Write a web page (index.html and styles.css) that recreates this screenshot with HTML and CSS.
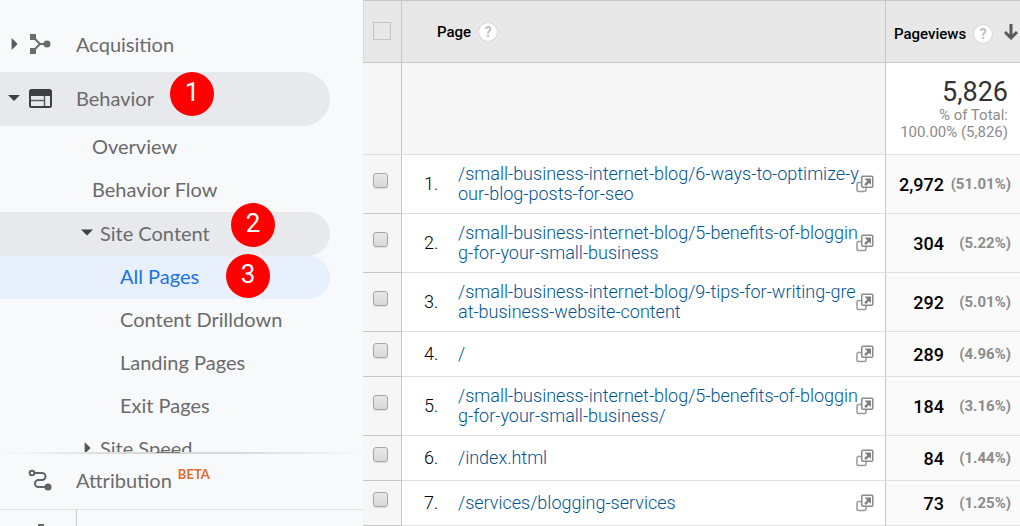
FILE: index.html
```
<!DOCTYPE html>
<html lang="en">
<head>
	<meta charset="utf-8">
	<meta name="viewport" content="width=device-width, initial-scale=1">
	<title>All Pages</title>
	<link rel="stylesheet" href="styles.css">
</head>
<body>
	<svg class="sprite" aria-hidden="true">
		<symbol id="open" viewBox="0 0 18 18">
			<rect x="1" y="7.500" width="9" height="9" rx="1.500" fill="#fff" stroke="#999" stroke-width="1.500"/>
			<rect x="5.750" y="1.250" width="11" height="11" rx="1" fill="#fff" stroke="#8a8a8a" stroke-width="1.500"/>
			<path d="M8.500 3.500H15V10l-2-2-3 3-1.800-1.800 3-3z" fill="#808080"/>
		</symbol>
	</svg>

	<nav class="sidebar">
		<div class="menu">
			<a href="#" class="item top">
				<span class="arrow right"></span>
				<svg class="icon" viewBox="0 0 24 24">
					<path d="M5 5l7 7-7 7M12 12h7" fill="none" stroke="#6b6b6b" stroke-width="2"/>
					<path d="M2 2h6v6H2zM2 16h6v6H2z" fill="#6b6b6b"/>
					<circle cx="19" cy="12" r="3.500" fill="#6b6b6b"/>
				</svg>
				Acquisition
			</a>
			<a href="#" class="item top open">
				<span class="arrow down"></span>
				<svg class="icon" viewBox="0 0 24 24">
					<rect x="2" y="4" width="21" height="17" rx="1.500" fill="none" stroke="#3c4043" stroke-width="2"/>
					<path d="M2 4h21v6H2z" fill="#3c4043"/>
					<path d="M3 14.500h13M16.500 10v10" fill="none" stroke="#5c6063" stroke-width="1.500"/>
				</svg>
				Behavior
				<span class="badge one">1</span>
			</a>
			<a href="#" class="item sub">Overview</a>
			<a href="#" class="item sub">Behavior Flow</a>
			<a href="#" class="item group open">
				<span class="arrow down"></span>
				Site Content
				<span class="badge two">2</span>
			</a>
			<a href="#" class="item leaf active">
				All Pages
				<span class="badge three">3</span>
			</a>
			<a href="#" class="item leaf">Content Drilldown</a>
			<a href="#" class="item leaf">Landing Pages</a>
			<a href="#" class="item leaf">Exit Pages</a>
			<a href="#" class="item group">
				<span class="arrow right"></span>
				Site Speed
			</a>
		</div>
		<div class="handle"></div>
		<a href="#" class="item top attribution">
			<svg class="icon" viewBox="0 0 24 24">
				<circle cx="4" cy="5" r="2.300" fill="none" stroke="#5f6368" stroke-width="2"/>
				<path d="M6.500 5H14a3.500 3.500 0 0 1 0 7h-3.500a3.500 3.500 0 0 0 0 7H20" fill="none" stroke="#5f6368" stroke-width="2"/>
				<circle cx="20" cy="19" r="3.500" fill="#5f6368"/>
			</svg>
			Attribution
			<span class="beta">BETA</span>
		</a>
		<div class="bottom">
			<div class="bottom_left"><span class="dot"></span></div>
		</div>
	</nav>

	<main>
		<table>
			<colgroup>
				<col class="col_check">
				<col>
				<col class="col_views">
			</colgroup>
			<thead>
				<tr>
					<th class="check"><input type="checkbox" class="all" aria-label="Select all"></th>
					<th class="page"><div class="head">Page <button type="button" class="help">?</button></div></th>
					<th class="views">
						<div class="head">
							Pageviews
							<button type="button" class="help">?</button>
							<svg class="sort" viewBox="0 0 16 16"><path d="M8 0v14M2 8l6 6 6-6" fill="none" stroke="#5a5a5a" stroke-width="3"/></svg>
						</div>
					</th>
				</tr>
			</thead>
			<tbody>
				<tr class="total">
					<td class="check"></td>
					<td class="page"></td>
					<td class="views">
						<div class="sum">5,826</div>
						<div class="note">% of Total:<br>100.00% (5,826)</div>
					</td>
				</tr>
				<tr>
					<td class="check"><input type="checkbox" aria-label="Row 1"></td>
					<td class="page"><div class="line"><span class="num">1.</span><a href="#">/small-business-internet-blog/6-ways-to-optimize-your-blog-posts-for-seo</a><button type="button" class="out" aria-label="Open page"><svg><use href="#open"/></svg></button></div></td>
					<td class="views"><div class="value">2,972 <span>(51.01%)</span></div></td>
				</tr>
				<tr>
					<td class="check"><input type="checkbox" aria-label="Row 2"></td>
					<td class="page"><div class="line"><span class="num">2.</span><a href="#">/small-business-internet-blog/5-benefits-of-blogging-for-your-small-business</a><button type="button" class="out" aria-label="Open page"><svg><use href="#open"/></svg></button></div></td>
					<td class="views"><div class="value">304 <span>(5.22%)</span></div></td>
				</tr>
				<tr>
					<td class="check"><input type="checkbox" aria-label="Row 3"></td>
					<td class="page"><div class="line"><span class="num">3.</span><a href="#">/small-business-internet-blog/9-tips-for-writing-great-business-website-content</a><button type="button" class="out" aria-label="Open page"><svg><use href="#open"/></svg></button></div></td>
					<td class="views"><div class="value">292 <span>(5.01%)</span></div></td>
				</tr>
				<tr>
					<td class="check"><input type="checkbox" aria-label="Row 4"></td>
					<td class="page"><div class="line"><span class="num">4.</span><a href="#">/</a><button type="button" class="out" aria-label="Open page"><svg><use href="#open"/></svg></button></div></td>
					<td class="views"><div class="value">289 <span>(4.96%)</span></div></td>
				</tr>
				<tr>
					<td class="check"><input type="checkbox" aria-label="Row 5"></td>
					<td class="page"><div class="line"><span class="num">5.</span><a href="#">/small-business-internet-blog/5-benefits-of-blogging-for-your-small-business/</a><button type="button" class="out" aria-label="Open page"><svg><use href="#open"/></svg></button></div></td>
					<td class="views"><div class="value">184 <span>(3.16%)</span></div></td>
				</tr>
				<tr>
					<td class="check"><input type="checkbox" aria-label="Row 6"></td>
					<td class="page"><div class="line"><span class="num">6.</span><a href="#">/index.html</a><button type="button" class="out" aria-label="Open page"><svg><use href="#open"/></svg></button></div></td>
					<td class="views"><div class="value">84 <span>(1.44%)</span></div></td>
				</tr>
				<tr>
					<td class="check"><input type="checkbox" aria-label="Row 7"></td>
					<td class="page"><div class="line"><span class="num">7.</span><a href="#">/services/blogging-services</a><button type="button" class="out" aria-label="Open page"><svg><use href="#open"/></svg></button></div></td>
					<td class="views"><div class="value">73 <span>(1.25%)</span></div></td>
				</tr>
			</tbody>
		</table>
	</main>
</body>
</html>
```

FILE: styles.css
```
* {
	box-sizing: border-box;
}

body {
	margin: 0;
	display: flex;
	height: 100vh;
	overflow: hidden;
	background-color: #f8f9fb;
	font-family: Roboto, sans-serif;
}

a {
	text-decoration: none;
}

button {
	padding: 0;
	border: none;
	background: none;
	font-family: inherit;
}

.sprite {
	position: absolute;
	width: 0;
	height: 0;
}

/* sidebar */
.sidebar {
	width: 363px;
	flex: none;
	display: flex;
	flex-direction: column;
	font-family: Lato, sans-serif;
	font-size: 20px;
}

.menu {
	flex: 1;
	min-height: 0;
	overflow: hidden;
	padding-top: 18px;
}

.item {
	position: relative;
	display: flex;
	align-items: center;
	height: 43px;
	margin-right: 33px;
	padding-bottom: 3px;
	border-radius: 0 27px 27px 0;
	color: #6b6b6b;
}

.top {
	height: 54px;
	padding-left: 8px;
	padding-bottom: 2px;
}

.sub {
	padding-left: 92px;
}

.group {
	padding-left: 81px;
}

.leaf {
	padding-left: 120px;
}

.open {
	background-color: #e8e9ec;
}

.group.open {
	height: 44px;
}

.active {
	background-color: #e8effd;
	color: #1a73e8;
}

.arrow {
	width: 12px;
	height: 12px;
	margin-right: 7px;
	background-color: #55585c;
}

.arrow.right {
	clip-path: polygon(30% 0, 80% 50%, 30% 100%);
}

.arrow.down {
	background-color: #3c4043;
	clip-path: polygon(0 25%, 100% 25%, 50% 75%);
}

.icon {
	width: 24px;
	height: 24px;
	margin: 0 24px 0 1px;
}

.badge {
	position: absolute;
	width: 44px;
	height: 44px;
	border-radius: 50%;
	background-color: #f00;
	color: #fff;
	font-family: Roboto, sans-serif;
	font-size: 26px;
	line-height: 40px;
	text-align: center;
	z-index: 1;
}

.one {
	left: 170px;
	top: 0;
}

.two {
	left: 231px;
	top: -9px;
}

.three {
	left: 226px;
	top: -2px;
}

.handle {
	height: 2px;
	background: linear-gradient(#7a7a7a, #7a7a7a) 156px 0 / 24px 1px no-repeat, linear-gradient(to right, #f8f9fb, #d8d8d8 35%, #d8d8d8 65%, #f8f9fb);
}

.attribution {
	height: 55px;
	padding-left: 27px;
	padding-bottom: 3px;
}

.beta {
	align-self: flex-start;
	margin: 12px 0 0 6px;
	color: #e0692f;
	font-size: 13px;
	font-weight: 700;
	line-height: 16px;
}

.bottom {
	height: 17px;
	border-top: 1px solid #dfe1e4;
}

.bottom_left {
	display: flex;
	align-items: flex-end;
	justify-content: center;
	width: 77px;
	height: 16px;
	padding-left: 5px;
	border-right: 1px solid #c8cacd;
}

.dot {
	width: 6px;
	height: 2px;
	background-color: #6b6b6b;
}

/* report table */
main {
	flex: 1;
	min-width: 0;
}

table {
	width: 100%;
	table-layout: fixed;
	border-collapse: separate;
	border-spacing: 0;
	background-color: #fff;
	border-top: 1px solid #c8c8c8;
}

.col_check {
	width: 39px;
}

.col_views {
	width: 134px;
}

th, td {
	height: 45px;
	padding: 0;
	border-bottom: 1px solid #e0e0e0;
}

th {
	height: 62px;
	background-color: #e8e8e8;
	border-bottom-color: #c8c8c8;
	color: #000;
	font-size: 15px;
	font-weight: 500;
	text-align: left;
}

.check {
	border-right: 1px solid #c8c8c8;
	border-bottom-color: #c8c8c8;
	padding: 0 0 8px 10px;
}

td.check, .total .page {
	background-color: #f6f6f6;
}

.total td {
	height: 92px;
	border-bottom-color: #e0e0e0;
}

th.check {
	padding-bottom: 2px;
	border-left: 1px solid #d8d8d8;
	padding-left: 9px;
}

.page {
	border-right: 1px solid #c8c8c8;
}

td.views {
	background-color: #fafafa;
}

.total td.views {
	padding: 0 12px 0 0;
	background-color: #fff;
	text-align: right;
}

input[type=checkbox] {
	appearance: none;
	display: block;
	width: 15px;
	height: 15px;
	margin: 0;
	border: 1px solid #a6a6a6;
	border-radius: 3px;
	background: linear-gradient(#e8e8e8, #d8d8d8);
	box-shadow: 0 1px 1px #ddd;
}

input.all {
	width: 18px;
	height: 18px;
	border-color: #c4c4c4;
	border-radius: 0;
	background: none;
	box-shadow: none;
}

.head {
	display: flex;
	align-items: center;
	padding-left: 35px;
}

.views .head {
	padding: 4px 0 0 8px;
}

.help {
	width: 18px;
	height: 18px;
	margin-left: 8px;
	border-radius: 50%;
	background-color: #fff;
	box-shadow: 0 0 2px #bbb;
	color: #c0c0c0;
	font-size: 14px;
	font-weight: 700;
	line-height: 18px;
}

.sort {
	width: 16px;
	height: 16px;
	margin: 0 0 4px 11px;
	flex: none;
}

.sum {
	color: #333;
	font-size: 27px;
	line-height: 30px;
}

.note {
	color: #8c8c8c;
	font-size: 15px;
	line-height: 17px;
}

.line {
	display: flex;
	align-items: center;
	padding: 9px 11px 9px 22px;
	font-size: 18px;
	font-weight: 300;
	line-height: 20px;
}

.num {
	width: 34px;
	flex: none;
	color: #000;
}

.line a {
	flex: 1;
	margin-right: -4px;
	color: #005596;
	word-break: break-all;
}

.out {
	width: 18px;
	height: 18px;
	flex: none;
}

.out svg {
	display: block;
	width: 18px;
	height: 18px;
}

.value {
	display: flex;
	align-items: center;
	justify-content: flex-end;
	padding-right: 9px;
	font-size: 18px;
	font-weight: 500;
}

.value span {
	width: 67px;
	color: #8c8c8c;
	font-size: 15px;
	font-weight: 700;
	text-align: right;
}
```
